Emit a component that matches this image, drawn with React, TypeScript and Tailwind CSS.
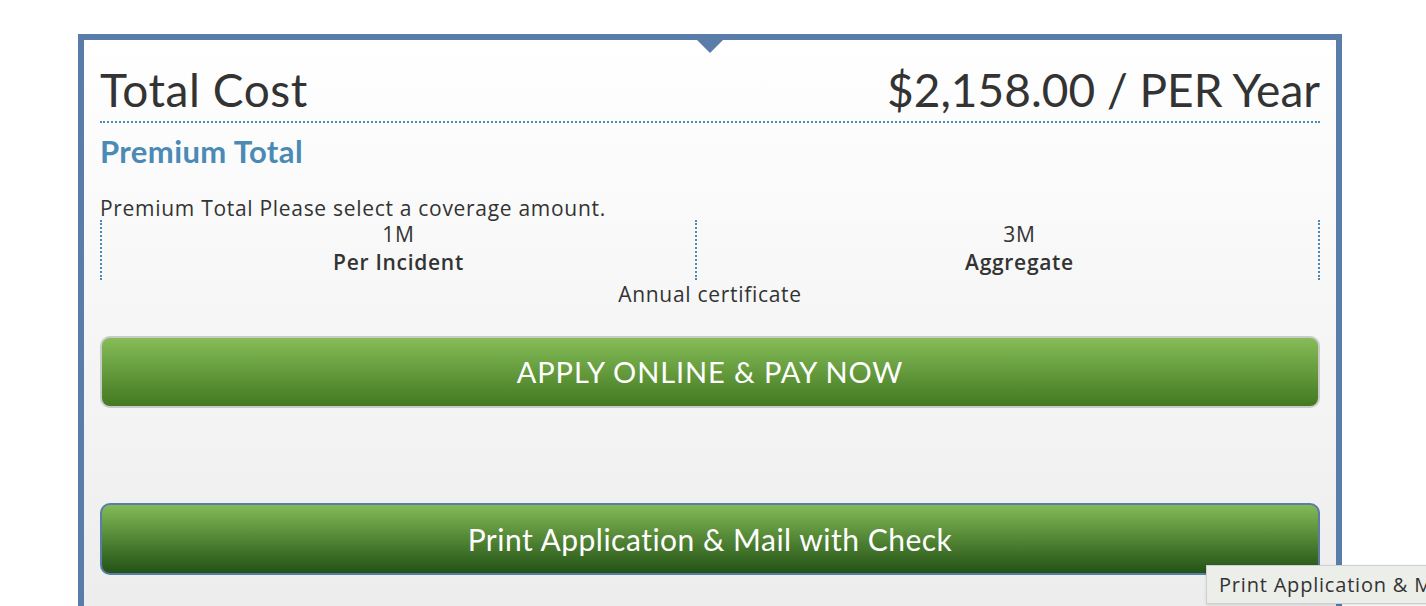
import React from "react";

const App = () => {
    const coverage = [
        { amount: "1M", label: "Per Incident", pad: "" },
        { amount: "3M", label: "Aggregate", pad: "pl-6" },
    ];

    return (
        <div className="relative w-[1426px] h-[606px] overflow-hidden bg-white font-['Lato',sans-serif] text-[#333]">
            <div className="pt-[34px] pl-[78px] w-[1342px]">
                <section className="relative h-[640px] border-[6px] border-b-0 border-[#5a7ca8] bg-gradient-to-b from-white to-[#ebebeb] px-4">
                    <div className="absolute left-[613px] top-0 w-0 h-0 border-l-[13px] border-r-[13px] border-t-[13px] border-l-transparent border-r-transparent border-t-[#5a7ca8]" />

                    <div className="flex justify-between items-end pt-[25px] pb-[6px] border-b-2 border-dotted border-[#4a8ab5]">
                        <h1 className="text-[46px] leading-[50px] tracking-[0.6px]">Total Cost</h1>
                        <span className="text-[46px] leading-[50px]">$2,158.00 / PER Year</span>
                    </div>

                    <h2 className="mt-[11px] text-[31px] leading-[34px] font-bold tracking-[0.4px] text-[#4a8ab5]">
                        Premium Total
                    </h2>

                    <div className="font-['Open_Sans',sans-serif] text-[21px] tracking-[0.7px]">
                        <p className="mt-[28px] leading-[24px]">
                            Premium Total Please select a coverage amount.
                        </p>
                        <div className="grid grid-cols-[595px_1fr] border-r-2 border-dotted border-[#4a8ab5] leading-[28px] text-center">
                            {coverage.map((c) => (
                                <div key={c.amount} className={`border-l-2 border-dotted border-[#4a8ab5] pb-1 ${c.pad}`}>
                                    <div>{c.amount}</div>
                                    <div className="font-semibold">{c.label}</div>
                                </div>
                            ))}
                        </div>
                        <p className="text-center leading-[28px]">Annual certificate</p>
                    </div>

                    <button className="mt-[28px] w-full h-[72px] rounded-[10px] border-2 border-[#cacaca] bg-gradient-to-b from-[#86bd58] to-[#437920] text-white text-[29px] tracking-[0.9px]">
                        APPLY ONLINE &amp; PAY NOW
                    </button>

                    <button className="mt-[95px] w-full h-[72px] rounded-[10px] border-2 border-[#5a7ca8] bg-gradient-to-b from-[#84bb56] to-[#235316] text-white text-[30px] tracking-[0.5px]">
                        Print Application &amp; Mail with Check
                    </button>
                </section>
            </div>

            <div className="absolute left-[1206px] top-[565px] h-[39px] pl-[12px] pr-3 flex items-center whitespace-nowrap bg-[#eceeea] border border-[#cfcfcf] shadow-sm text-[20px] tracking-[0.8px] text-[#333] font-['Open_Sans',sans-serif]">
                Print Application &amp; Mail with Check
            </div>
        </div>
    );
};

export default App;
